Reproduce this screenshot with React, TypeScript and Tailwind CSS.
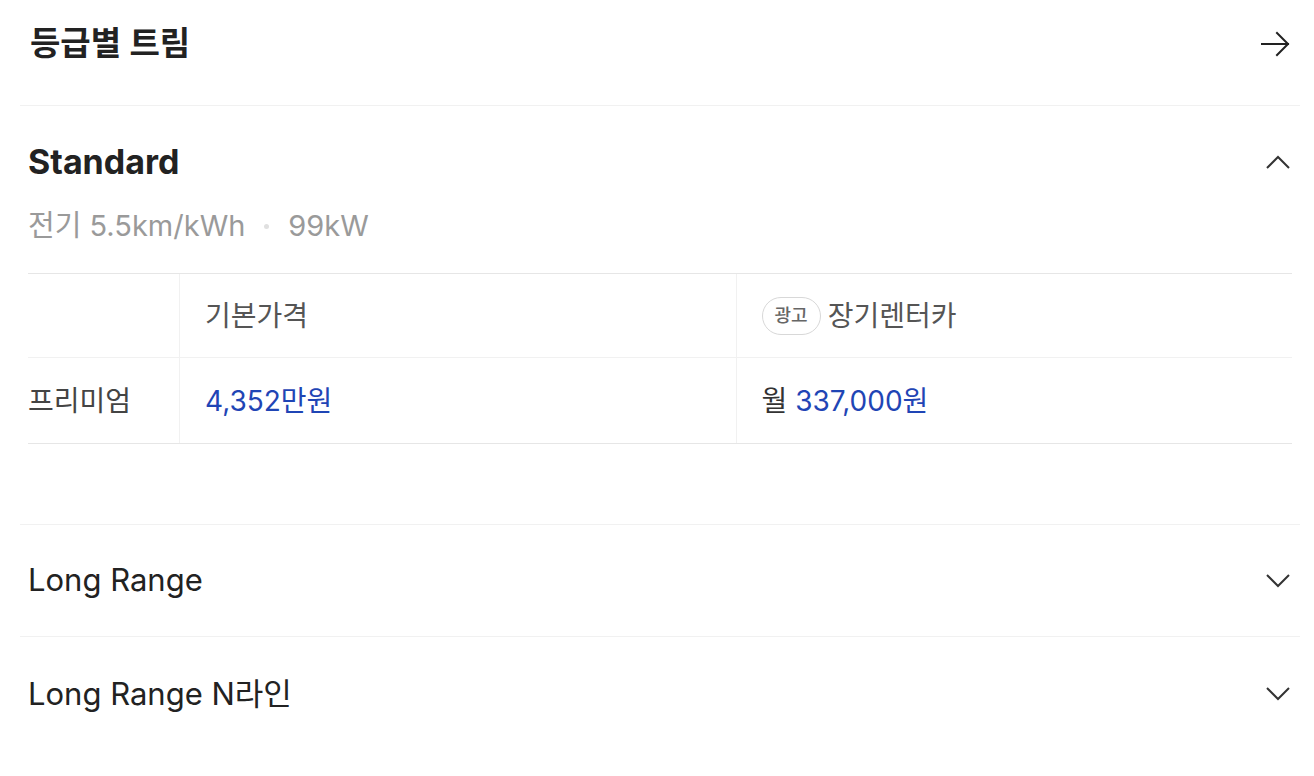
import * as React from "react";

const FONT = "font-['Inter','Noto_Sans_CJK_KR',sans-serif]";

function ArrowRight() {
  return (
    <svg width="30" height="26" viewBox="0 0 30 26" fill="none" stroke="#222" strokeWidth="2" strokeLinecap="square">
      <path d="M2 13H28" />
      <path d="M17 2L28 13L17 24" strokeLinejoin="miter" />
    </svg>
  );
}

function Chevron({ up }: { up?: boolean }) {
  return (
    <svg width="26" height="16" viewBox="0 0 26 16" fill="none" stroke="#333" strokeWidth="2">
      {up ? <path d="M2 14L13 3L24 14" /> : <path d="M2 2L13 13L24 2" />}
    </svg>
  );
}

const trims = ["Long Range", "Long Range N라인"];

export default function App() {
  return (
    <div className={`${FONT} min-h-[776px] bg-white pl-[20px] pr-[14px] text-[#222]`}>
      {/* header */}
      <div className="border-b border-[#f1f1f1] pb-[17px]">
        <div className="flex h-[88px] items-center justify-between px-[10px]">
          <h2 className="text-[33px] font-semibold">등급별 트림</h2>
          <ArrowRight />
        </div>
      </div>

      {/* open trim */}
      <div className="border-b border-[#f1f1f1] px-[8px] pb-[80px] pt-[38px]">
        <div className="flex items-center justify-between">
          <h3 className="text-[34px] font-bold leading-[36px]">Standard</h3>
          <div className="pr-[1px]">
            <Chevron up />
          </div>
        </div>
        <div className="mt-[30px] flex items-center text-[29px] leading-[32px] text-[#9a9a9a]">
          <span>전기 5.5km/kWh</span>
          <span className="mx-[19px] h-[5px] w-[5px] rounded-full bg-[#e0e0e0]" />
          <span>99kW</span>
        </div>

        <div className="mt-[31px] border-t border-[#e6e6e6]">
          <div className="grid h-[84px] grid-cols-[151px_1fr_1fr] border-b border-[#f1f1f1] text-[28px] text-[#555]">
            <div />
            <div className="flex items-center border-l border-[#f1f1f1] pl-[25px]">기본가격</div>
            <div className="flex items-center border-l border-[#f1f1f1] pl-[25px]">
              <span className="mr-[7px] flex h-[38px] items-center rounded-full border border-[#d8d8d8] px-[12px] text-[18px] font-medium text-[#666]">
                광고
              </span>
              장기렌터카
            </div>
          </div>
          <div className="grid h-[86px] grid-cols-[151px_1fr_1fr] border-b border-[#e6e6e6] text-[28px]">
            <div className="flex items-center text-[#444]">프리미엄</div>
            <div className="flex items-center border-l border-[#f1f1f1] pl-[25px] text-[#1f45b5]">4,352만원</div>
            <div className="flex items-center border-l border-[#f1f1f1] pl-[25px]">
              <span className="mr-[8px] text-[#333]">월</span>
              <span className="text-[#1f45b5]">337,000원</span>
            </div>
          </div>
        </div>
      </div>

      {/* closed trims */}
      {trims.map((t, i) => (
        <div
          key={t}
          className={`flex items-center justify-between px-[8px] ${i === 0 ? "h-[112px] border-b border-[#f1f1f1]" : "h-[114px]"}`}
        >
          <span className="text-[31px]">{t}</span>
          <div className="pr-[1px]">
            <Chevron />
          </div>
        </div>
      ))}
    </div>
  );
}
